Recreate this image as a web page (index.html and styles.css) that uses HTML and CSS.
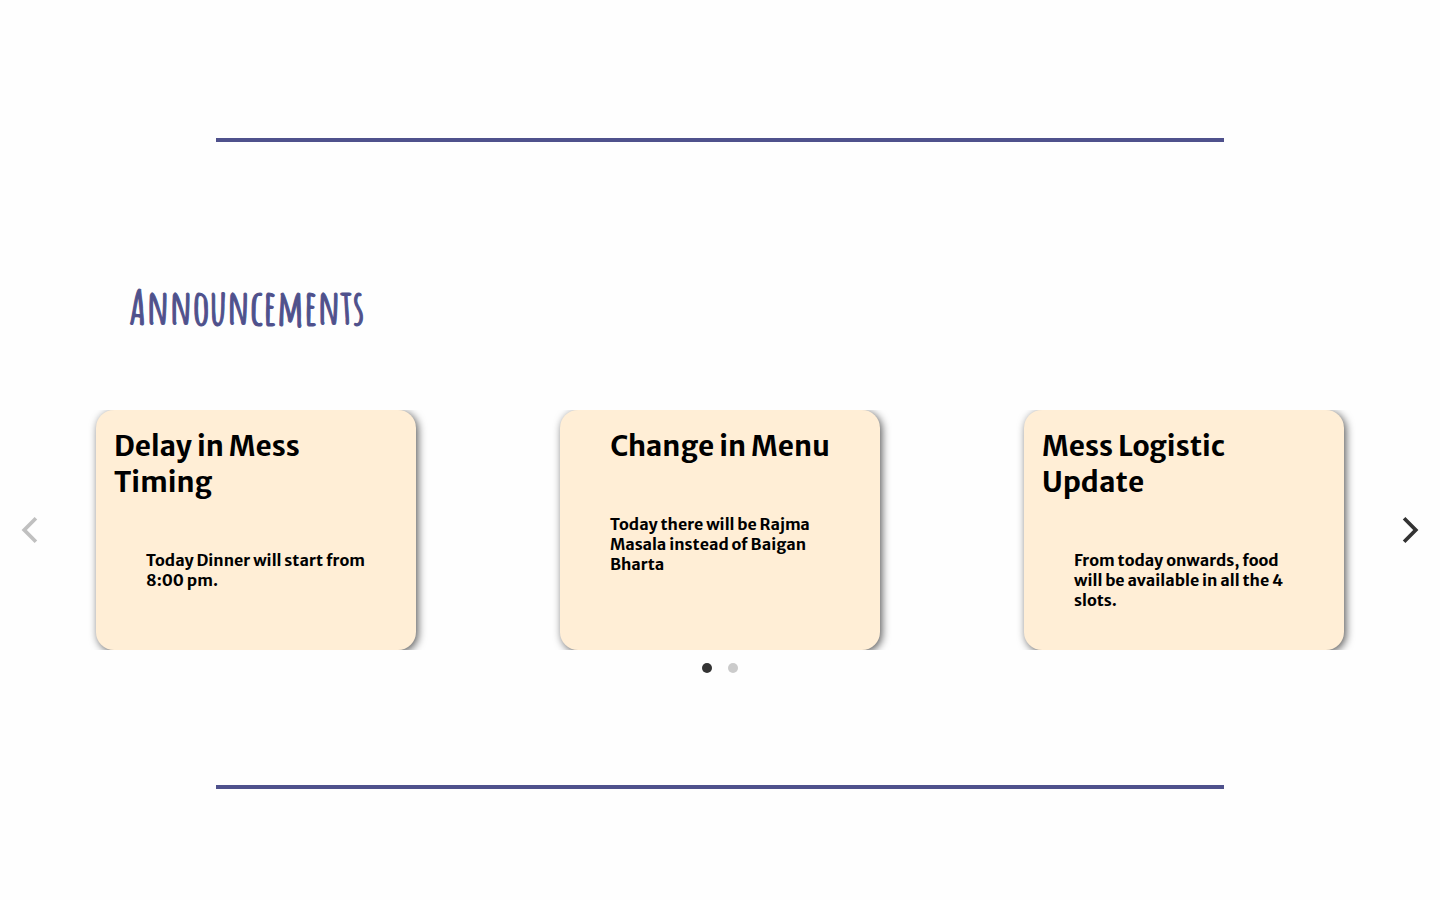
FILE: index.html
```html
<!DOCTYPE html>
<html lang="en">
<head>
<meta charset="utf-8">
<title>Announcements</title>
<link rel="stylesheet" href="styles.css">
</head>
<body>
<main class="page">
  <hr class="divider">
  <section class="announcements" aria-labelledby="heading">
    <h1 class="heading" id="heading">Announcements</h1>
    <div class="carousel">
      <div class="slides">
        <article class="card">
          <h2 class="card-title">Delay in Mess Timing</h2>
          <p class="card-text">Today Dinner will start from 8:00 pm.</p>
        </article>
        <article class="card">
          <h2 class="card-title">Change in Menu</h2>
          <p class="card-text">Today there will be Rajma Masala instead of Baigan Bharta</p>
        </article>
        <article class="card">
          <h2 class="card-title">Mess Logistic Update</h2>
          <p class="card-text">From today onwards, food will be available in all the 4 slots.</p>
        </article>
      </div>
      <button class="arrow arrow-prev" type="button" aria-label="Previous" disabled>
        <svg class="arrow-icon" viewBox="0 0 100 100"><path d="M10 50 60 100 70 90 30 50 70 10 60 0Z"/></svg>
      </button>
      <button class="arrow arrow-next" type="button" aria-label="Next">
        <svg class="arrow-icon" viewBox="0 0 100 100"><path d="M90 50 40 100 30 90 70 50 30 10 40 0Z"/></svg>
      </button>
    </div>
    <div class="dots">
      <button class="dot dot-active" type="button" aria-label="Page 1"></button>
      <button class="dot" type="button" aria-label="Page 2"></button>
    </div>
  </section>
  <hr class="divider">
</main>
</body>
</html>
```
FILE: styles.css
```css
* {
  box-sizing: border-box;
}

body {
  margin: 0;
  background: #fefefe;
  color: #000;
  font-family: "Merriweather Sans", Lato, sans-serif;
}

.page {
  padding: 138px 0 111px;
}

.divider {
  width: 70%;
  height: 4px;
  margin: 0 auto;
  border: 0;
  background: #4f518c;
}

.announcements {
  padding: 135px 0 112px;
}

.heading {
  margin: 0 0 73px 9%;
  color: #4f518c;
  font: 700 48px/60px "Amatic SC", "Open Sans Condensed", sans-serif;
  -webkit-text-stroke: 1px #4f518c;
}

.carousel {
  position: relative;
}

.slides {
  display: grid;
  grid-template-columns: repeat(3, 1fr);
  justify-items: center;
  padding: 0 24px;
  overflow: hidden;
}

.card {
  display: flex;
  flex-direction: column;
  align-items: center;
  width: 320px;
  min-height: 240px;
  padding: 18px;
  border-radius: 18px;
  background: #ffeed6;
  box-shadow: 2px 2px 8px rgba(0, 0, 0, 0.65);
}

.card-title {
  margin: 0 0 50px;
  font-size: 28px;
  font-weight: 700;
  line-height: 36px;
}

.card-text {
  width: 220px;
  margin: 0;
  font-size: 16px;
  font-weight: 700;
  line-height: 20px;
}

.arrow {
  position: absolute;
  top: 50%;
  display: flex;
  width: 44px;
  height: 44px;
  padding: 9px;
  border: 0;
  border-radius: 50%;
  background: transparent;
  color: #333;
  transform: translateY(-50%);
}

.arrow:disabled {
  opacity: 0.3;
}

.arrow-prev {
  left: 10px;
}

.arrow-next {
  right: 10px;
}

.arrow-icon {
  width: 26px;
  height: 26px;
  fill: currentColor;
}

.dots {
  display: flex;
  justify-content: center;
  gap: 16px;
  padding-top: 13px;
}

.dot {
  width: 10px;
  height: 10px;
  padding: 0;
  border: 0;
  border-radius: 50%;
  background: #333;
  opacity: 0.25;
}

.dot-active {
  opacity: 1;
}
```
